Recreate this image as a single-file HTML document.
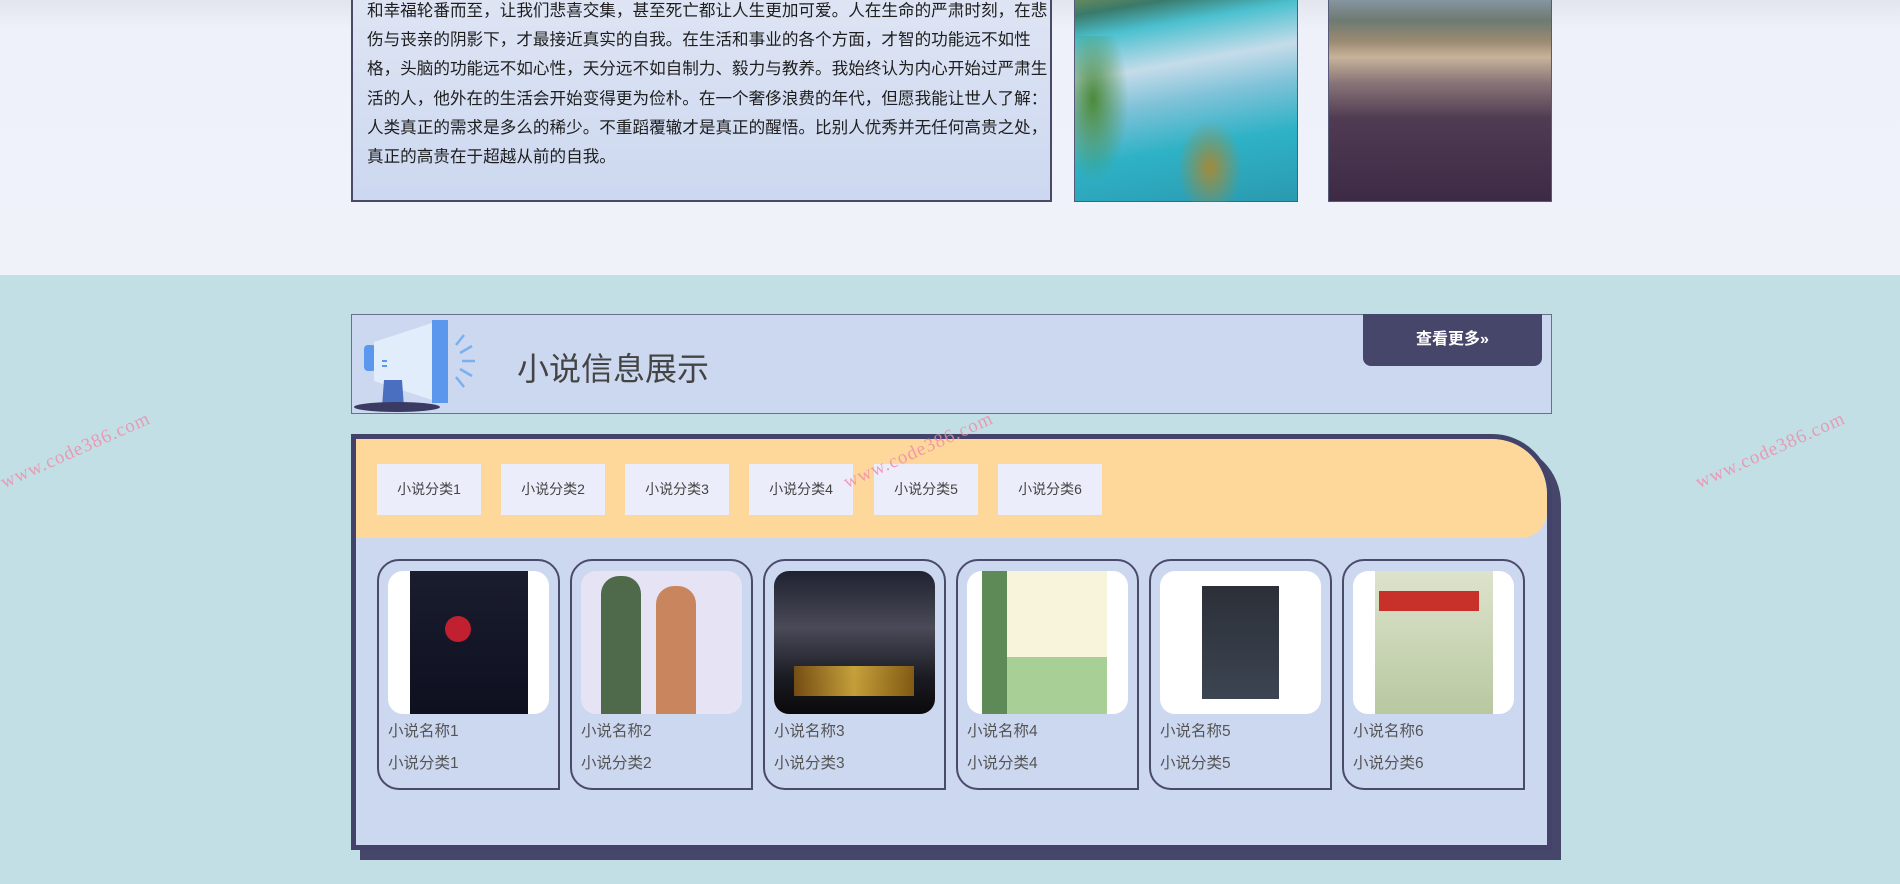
<!DOCTYPE html>
<html><head><meta charset="utf-8"><style>
*{margin:0;padding:0;box-sizing:border-box}
body{width:1900px;height:884px;overflow:hidden;position:relative;background:#c2dfe6;font-family:"Liberation Sans","Noto Sans CJK SC",sans-serif}
.top{position:absolute;left:0;top:0;width:1900px;height:275px;background:linear-gradient(#e2e5ee 0,#eef1fa 30px,#f0f2fa 100%)}
.txt{position:absolute;left:351px;top:-12px;width:701px;height:214px;border:2px solid #4a4a66;border-top:none;background:linear-gradient(#dfe5f4,#ccd8f0);padding:8px 0 0 14px;font-size:16.6px;line-height:29.2px;color:#1e1e1e}
.img{position:absolute;top:-5px;height:207px;border:1px solid #555a78}
.i1{left:1074px;width:224px;background:linear-gradient(170deg,#6f8c5a 0,#3a7a6a 8%,#4bc0cf 18%,#c5dcea 35%,#7fc2d8 50%,#2fb2c6 70%,#2a9ab0 100%)}
.i1:before{content:"";position:absolute;left:0;top:40px;width:60px;height:160px;background:radial-gradient(ellipse at 30% 40%,#4c8a3a 0,rgba(76,138,58,0) 60%)}
.i1:after{content:"";position:absolute;left:100px;top:120px;width:70px;height:86px;background:radial-gradient(ellipse at 50% 60%,#a08a3a 0,rgba(160,138,58,0) 65%)}
.i2{left:1328px;width:224px;background:linear-gradient(#8a9aa8 0,#6e7a72 12%,#9a8a72 22%,#c7b39a 30%,#8a7678 42%,#4f3b52 60%,#3d2a45 100%)}
.hdr{position:absolute;left:351px;top:314px;width:1201px;height:100px;background:#ccd8f0;border:1px solid #6a6f8a}
.hdr h2{position:absolute;left:165px;top:29px;font-size:32px;font-weight:normal;color:#444}
.more{position:absolute;left:1011px;top:-1px;width:179px;height:52px;background:#46466a;border-radius:0 0 8px 8px;color:#fff;font-size:16px;text-align:center;line-height:52px;font-weight:bold}
.box{position:absolute;left:351px;top:434px;width:1210px;height:426px}
.sh{position:absolute;left:9px;top:10px;width:1201px;height:416px;background:#46466a;border-radius:0 60px 0 0}
.main{position:absolute;left:0;top:0;width:1201px;height:416px;background:#ccd8f0;border:5px solid #43436a;border-radius:0 60px 0 0;overflow:hidden}
.band{position:absolute;left:0;top:0;width:100%;height:99px;background:#fdd89a;border-radius:0 55px 26px 0}
.cat{position:absolute;top:25px;width:104px;height:51px;background:#ebeefa;font-size:14px;color:#444;text-align:center;line-height:51px}
.card{position:absolute;top:120px;width:183px;height:231px;border:2px solid #4a4a6a;border-radius:22px 22px 0 22px}
.card .pic{position:absolute;left:9px;top:10px;width:161px;height:143px;background:#fff;border-radius:15px;overflow:hidden}
.card p{position:absolute;left:9px;font-size:15.5px;color:#555}
.wm{position:absolute;color:#f08aa8;font-family:"Liberation Serif",serif;font-size:19px;transform:rotate(-24deg);letter-spacing:1px;opacity:.8}
</style></head><body>
<div class="top"></div>
<div class="txt">和幸福轮番而至，让我们悲喜交集，甚至死亡都让人生更加可爱。人在生命的严肃时刻，在悲<br>伤与丧亲的阴影下，才最接近真实的自我。在生活和事业的各个方面，才智的功能远不如性<br>格，头脑的功能远不如心性，天分远不如自制力、毅力与教养。我始终认为内心开始过严肃生<br>活的人，他外在的生活会开始变得更为俭朴。在一个奢侈浪费的年代，但愿我能让世人了解：<br>人类真正的需求是多么的稀少。不重蹈覆辙才是真正的醒悟。比别人优秀并无任何高贵之处，<br>真正的高贵在于超越从前的自我。</div>
<div class="img i1"></div>
<div class="img i2"></div>

<div class="hdr">
<svg style="position:absolute;left:0;top:0" width="135" height="100">
<rect x="12" y="30" width="12" height="26" rx="4" fill="#5b97ec"/>
<polygon points="22,27 80,8 80,85 22,66" fill="#e2edfb"/>
<rect x="30" y="45" width="5" height="2" fill="#5b97ec"/><rect x="30" y="50" width="5" height="2" fill="#5b97ec"/>
<polygon points="32,65 50,65 52,92 30,92" fill="#4a6ec0"/>
<ellipse cx="45" cy="92" rx="43" ry="5" fill="#3a3a62"/>
<rect x="80" y="5" width="16" height="83" fill="#5b97ec"/>
<g stroke="#7ab0ee" stroke-width="2.5"><line x1="104" y1="30" x2="112" y2="20"/><line x1="108" y1="38" x2="120" y2="31"/><line x1="110" y1="46" x2="123" y2="46"/><line x1="108" y1="54" x2="120" y2="61"/><line x1="104" y1="62" x2="112" y2="72"/></g>
</svg>
<h2>小说信息展示</h2>
<div class="more">查看更多»</div>
</div>

<div class="box">
<div class="sh"></div>
<div class="main">
<div class="band">
<div class="cat" style="left:21px">小说分类1</div>
<div class="cat" style="left:145px">小说分类2</div>
<div class="cat" style="left:269px">小说分类3</div>
<div class="cat" style="left:393px">小说分类4</div>
<div class="cat" style="left:518px">小说分类5</div>
<div class="cat" style="left:642px">小说分类6</div>
</div>
<div class="card" style="left:21px"><div class="pic"><div style="position:absolute;left:22px;top:0;width:118px;height:143px;background:linear-gradient(#1a1d2e,#0e1020)"><div style="position:absolute;left:35px;top:45px;width:26px;height:26px;border-radius:50%;background:#c02030"></div></div></div><p style="top:158px">小说名称1</p><p style="top:190px">小说分类1</p></div>
<div class="card" style="left:214px"><div class="pic" style="background:#e6e4f4"><div style="position:absolute;left:20px;top:5px;width:40px;height:138px;background:#4f6a4a;border-radius:18px 18px 0 0"></div><div style="position:absolute;left:75px;top:15px;width:40px;height:128px;background:#c9865e;border-radius:18px 18px 0 0"></div></div><p style="top:158px">小说名称2</p><p style="top:190px">小说分类2</p></div>
<div class="card" style="left:407px"><div class="pic" style="background:linear-gradient(#1f2230,#4a4a58 40%,#1a1a22 75%,#0a0a0a)"><div style="position:absolute;left:20px;top:95px;width:120px;height:30px;background:linear-gradient(90deg,#8a5a10,#f0c040,#9a6a10);opacity:.8"></div></div><p style="top:158px">小说名称3</p><p style="top:190px">小说分类3</p></div>
<div class="card" style="left:600px"><div class="pic"><div style="position:absolute;left:15px;top:0;width:40px;height:143px;background:#5e8a58"></div><div style="position:absolute;left:40px;top:0;width:100px;height:143px;background:linear-gradient(#f8f4dc 60%,#a7cf96 60%)"></div></div><p style="top:158px">小说名称4</p><p style="top:190px">小说分类4</p></div>
<div class="card" style="left:793px"><div class="pic"><div style="position:absolute;left:42px;top:15px;width:77px;height:113px;background:linear-gradient(#2c2f38,#3c4552)"></div></div><p style="top:158px">小说名称5</p><p style="top:190px">小说分类5</p></div>
<div class="card" style="left:986px"><div class="pic"><div style="position:absolute;left:22px;top:0;width:118px;height:143px;background:linear-gradient(#dde3cc,#b8c8a0)"><div style="position:absolute;left:4px;top:20px;width:100px;height:20px;background:#c8302a"></div></div></div><p style="top:158px">小说名称6</p><p style="top:190px">小说分类6</p></div>
</div>
</div>

<div class="wm" style="left:-5px;top:440px">www.code386.com</div>
<div class="wm" style="left:838px;top:440px">www.code386.com</div>
<div class="wm" style="left:1690px;top:440px">www.code386.com</div>
</body></html>
